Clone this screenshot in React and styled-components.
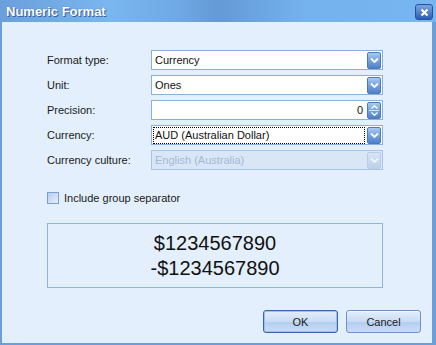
import React from 'react'
import styled, { createGlobalStyle } from 'styled-components'

const GlobalStyle = createGlobalStyle`
  html, body {
    margin: 0;
    padding: 0;
    background: #e3eefb;
    font-family: "Liberation Sans", Arial, sans-serif;
  }
`

const Window = styled.div`
  width: 436px;
  height: 345px;
  box-sizing: border-box;
  display: flex;
  flex-direction: column;
  border-left: 2px solid #6a9fdc;
  border-right: 4px solid #6a9fdc;
  border-bottom: 2px solid #6a9fdc;
  background: #e3effc;
`

const TitleBar = styled.div`
  height: 22px;
  margin: 0 -4px 0 -2px;
  display: flex;
  align-items: center;
  justify-content: space-between;
  padding: 0 3px 0 6px;
  background: linear-gradient(
    90deg,
    #6a9fdc 0%,
    #7ab6f0 25%,
    #70aae6 40%,
    #649ad6 50%,
    #74b2ee 70%,
    #78b6f2 100%
  );
`

const Title = styled.span`
  color: #fff;
  font-weight: bold;
  font-size: 13px;
  text-shadow: 1px 1px 0 #3a5f9a, 0 0 1px #3a5f9a;
`

const CloseButton = styled.div`
  flex-shrink: 0;
  width: 18px;
  height: 16px;
  border-radius: 3px;
  border: 1px solid #2a4f94;
  box-sizing: border-box;
  background: linear-gradient(#7aa6e6, #2f5cb0);
  display: flex;
  align-items: center;
  justify-content: center;
  margin-top: 2px;
`

const Body = styled.div`
  flex: 1;
  display: flex;
  flex-direction: column;
  padding: 28px 11px 0 45px;
`

const Form = styled.div`
  display: grid;
  grid-template-columns: 104px 232px;
  grid-auto-rows: 20px;
  row-gap: 5px;
  align-items: center;
`

const Label = styled.label`
  font-size: 11px;
  color: #1a1a1a;
`

const Field = styled.div`
  height: 20px;
  box-sizing: border-box;
  border: 1px solid ${p => (p.$disabled ? '#a9c4e6' : '#8cb0de')};
  background: ${p => (p.$disabled ? '#d9e6f6' : '#fff')};
  display: flex;
  align-items: center;
  padding: 0 1px 0 3px;
  font-size: 11px;
  color: ${p => (p.$disabled ? '#a3b9d6' : '#111')};
`

const FieldText = styled.span`
  flex: 1;
  text-align: ${p => (p.$right ? 'right' : 'left')};
  padding-right: ${p => (p.$right ? '4px' : '0')};
  white-space: nowrap;
`

const FocusText = styled.span`
  flex: 1;
  height: 17px;
  box-sizing: border-box;
  border: 1px dotted #000;
  margin-left: -2px;
  margin-right: 2px;
  display: flex;
  align-items: center;
  padding-left: 1px;
`

const DropButton = styled.div`
  flex-shrink: 0;
  width: 14px;
  height: 17px;
  border-radius: 2px;
  box-sizing: border-box;
  border: 1px solid ${p => (p.$disabled ? '#b9cde8' : '#4d78bf')};
  background: ${p =>
    p.$disabled
      ? 'linear-gradient(#d8e5f6, #bcd0ea)'
      : 'linear-gradient(#a9c9f2 0%, #7aa6e2 45%, #4f80cc 100%)'};
  display: flex;
  flex-direction: column;
  align-items: center;
  justify-content: center;
`

const SpinDivider = styled.div`
  width: 10px;
  height: 1px;
  background: #d6e4f8;
  margin: 1px 0;
`

const CheckRow = styled.div`
  display: flex;
  align-items: center;
  gap: 5px;
  margin-top: 22px;
  font-size: 11px;
  color: #1a1a1a;
`

const CheckBox = styled.div`
  width: 12px;
  height: 12px;
  box-sizing: border-box;
  border: 1px solid #7b9fd0;
  background: linear-gradient(135deg, #b7cdef, #e4eefb);
`

const Preview = styled.div`
  margin-top: 19px;
  width: 336px;
  height: 65px;
  box-sizing: border-box;
  border: 1px solid #8eb4e0;
  display: flex;
  flex-direction: column;
  align-items: center;
  justify-content: center;
  font-size: 20px;
  line-height: 25px;
  color: #111;
`

const Buttons = styled.div`
  display: flex;
  justify-content: flex-end;
  gap: 8px;
  margin-top: 22px;
`

const Button = styled.button`
  width: 75px;
  height: 23px;
  border-radius: 3px;
  border: 1px solid ${p => (p.$default ? '#3a64b0' : '#6f93c8')};
  box-shadow: ${p => (p.$default ? 'inset 0 0 0 1px #9fc0ec' : 'inset 0 1px 0 #f2f7fe')};
  background: linear-gradient(#e4eefb 0%, #c9dcf5 50%, #b3cdef 51%, #cadcf4 100%);
  font-family: "Liberation Sans", Arial, sans-serif;
  font-size: 11px;
  color: #1a1a1a;
  padding: 0;
`

const Chevron = ({ color = '#fff' }) => (
  <svg width="9" height="5" viewBox="0 0 9 5">
    <path d="M1 0.5 L4.5 4 L8 0.5" stroke={color} strokeWidth="1.8" fill="none" />
  </svg>
)

const Combo = ({ children, disabled, focused }) => (
  <Field $disabled={disabled}>
    {focused ? <FocusText>{children}</FocusText> : <FieldText>{children}</FieldText>}
    <DropButton $disabled={disabled}>
      <Chevron color={disabled ? '#eef4fc' : '#fff'} />
    </DropButton>
  </Field>
)

const Spin = ({ value }) => (
  <Field>
    <FieldText $right>{value}</FieldText>
    <DropButton>
      <svg width="9" height="4" viewBox="0 0 9 4">
        <path d="M1.5 3.5 L4.5 0.8 L7.5 3.5" stroke="#fff" strokeWidth="1.4" fill="none" />
      </svg>
      <SpinDivider />
      <svg width="9" height="4" viewBox="0 0 9 4">
        <path d="M1.5 0.5 L4.5 3.2 L7.5 0.5" stroke="#fff" strokeWidth="1.4" fill="none" />
      </svg>
    </DropButton>
  </Field>
)

const App = () => {
  return (
    <>
      <GlobalStyle />
      <Window>
        <TitleBar>
          <Title>Numeric Format</Title>
          <CloseButton>
            <svg width="9" height="9" viewBox="0 0 9 9">
              <path d="M1.5 1.5 L7.5 7.5 M7.5 1.5 L1.5 7.5" stroke="#fff" strokeWidth="2.2" />
            </svg>
          </CloseButton>
        </TitleBar>
        <Body>
          <Form>
            <Label>Format type:</Label>
            <Combo>Currency</Combo>
            <Label>Unit:</Label>
            <Combo>Ones</Combo>
            <Label>Precision:</Label>
            <Spin value="0" />
            <Label>Currency:</Label>
            <Combo focused>AUD (Australian Dollar)</Combo>
            <Label>Currency culture:</Label>
            <Combo disabled>English (Australia)</Combo>
          </Form>
          <CheckRow>
            <CheckBox />
            <span>Include group separator</span>
          </CheckRow>
          <Preview>
            <div>$1234567890</div>
            <div>-$1234567890</div>
          </Preview>
          <Buttons>
            <Button $default>OK</Button>
            <Button>Cancel</Button>
          </Buttons>
        </Body>
      </Window>
    </>
  )
}

export default App
